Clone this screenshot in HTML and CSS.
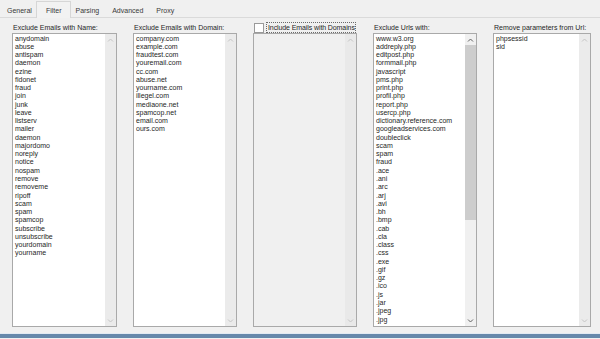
FILE: index.html
```html
<!DOCTYPE html>
<html lang="en">

<head>
    <meta charset="UTF-8">
    <meta name="viewport" content="width=device-width, initial-scale=1.0">
    <title>Filter Settings</title>
    <link rel="stylesheet" href="styles.css">
</head>

<body>
    <nav class="tabs">
        <span class="tab">General</span>
        <span class="tab active">Filter</span>
        <span class="tab">Parsing</span>
        <span class="tab">Advanced</span>
        <span class="tab">Proxy</span>
    </nav>

    <main class="panel">
        <!-- Exclude names -->
        <section class="field">
            <div class="caption">Exclude Emails with Name:</div>
            <div class="listbox">
                <ul class="items">
                    <li>anydomain</li>
                    <li>abuse</li>
                    <li>antispam</li>
                    <li>daemon</li>
                    <li>ezine</li>
                    <li>fidonet</li>
                    <li>fraud</li>
                    <li>join</li>
                    <li>junk</li>
                    <li>leave</li>
                    <li>listserv</li>
                    <li>mailer</li>
                    <li>daemon</li>
                    <li>majordomo</li>
                    <li>noreply</li>
                    <li>notice</li>
                    <li>nospam</li>
                    <li>remove</li>
                    <li>removeme</li>
                    <li>ripoff</li>
                    <li>scam</li>
                    <li>spam</li>
                    <li>spamcop</li>
                    <li>subscribe</li>
                    <li>unsubscribe</li>
                    <li>yourdomain</li>
                    <li>yourname</li>
                </ul>
                <div class="scrollbar">
                    <svg class="arrow" viewBox="0 0 7 4"><polyline points="1,3.5 3.5,1 6,3.5" /></svg>
                    <div class="track"></div>
                    <svg class="arrow" viewBox="0 0 7 4"><polyline points="1,0.5 3.5,3 6,0.5" /></svg>
                </div>
            </div>
        </section>

        <!-- Exclude domains -->
        <section class="field">
            <div class="caption">Exclude Emails with Domain:</div>
            <div class="listbox">
                <ul class="items">
                    <li>company.com</li>
                    <li>example.com</li>
                    <li>fraudtest.com</li>
                    <li>youremail.com</li>
                    <li>cc.com</li>
                    <li>abuse.net</li>
                    <li>yourname.com</li>
                    <li>illegel.com</li>
                    <li>mediaone.net</li>
                    <li>spamcop.net</li>
                    <li>email.com</li>
                    <li>ours.com</li>
                </ul>
                <div class="scrollbar">
                    <svg class="arrow" viewBox="0 0 7 4"><polyline points="1,3.5 3.5,1 6,3.5" /></svg>
                    <div class="track"></div>
                    <svg class="arrow" viewBox="0 0 7 4"><polyline points="1,0.5 3.5,3 6,0.5" /></svg>
                </div>
            </div>
        </section>

        <!-- Include domains (off) -->
        <section class="field">
            <label class="caption check">
                <span class="box"></span>
                <span class="check-text">Include Emails with Domains</span>
            </label>
            <div class="listbox disabled">
                <ul class="items"></ul>
                <div class="scrollbar">
                    <svg class="arrow" viewBox="0 0 7 4"><polyline points="1,3.5 3.5,1 6,3.5" /></svg>
                    <div class="track"></div>
                    <svg class="arrow" viewBox="0 0 7 4"><polyline points="1,0.5 3.5,3 6,0.5" /></svg>
                </div>
            </div>
        </section>

        <!-- Exclude urls -->
        <section class="field">
            <div class="caption">Exclude Urls with:</div>
            <div class="listbox">
                <ul class="items">
                    <li>www.w3.org</li>
                    <li>addreply.php</li>
                    <li>editpost.php</li>
                    <li>formmail.php</li>
                    <li>javascript</li>
                    <li>pms.php</li>
                    <li>print.php</li>
                    <li>profil.php</li>
                    <li>report.php</li>
                    <li>usercp.php</li>
                    <li>dictionary.reference.com</li>
                    <li>googleadservices.com</li>
                    <li>doubleclick</li>
                    <li>scam</li>
                    <li>spam</li>
                    <li>fraud</li>
                    <li>.ace</li>
                    <li>.ani</li>
                    <li>.arc</li>
                    <li>.arj</li>
                    <li>.avi</li>
                    <li>.bh</li>
                    <li>.bmp</li>
                    <li>.cab</li>
                    <li>.cla</li>
                    <li>.class</li>
                    <li>.css</li>
                    <li>.exe</li>
                    <li>.gif</li>
                    <li>.gz</li>
                    <li>.ico</li>
                    <li>.js</li>
                    <li>.jar</li>
                    <li>.jpeg</li>
                    <li>.jpg</li>
                </ul>
                <div class="scrollbar active">
                    <svg class="arrow" viewBox="0 0 7 4"><polyline points="1,3.5 3.5,1 6,3.5" /></svg>
                    <div class="track"><div class="thumb"></div></div>
                    <svg class="arrow" viewBox="0 0 7 4"><polyline points="1,0.5 3.5,3 6,0.5" /></svg>
                </div>
            </div>
        </section>

        <!-- Url parameters -->
        <section class="field">
            <div class="caption">Remove parameters from Url:</div>
            <div class="listbox">
                <ul class="items">
                    <li>phpsessid</li>
                    <li>sid</li>
                </ul>
                <div class="scrollbar">
                    <svg class="arrow" viewBox="0 0 7 4"><polyline points="1,3.5 3.5,1 6,3.5" /></svg>
                    <div class="track"></div>
                    <svg class="arrow" viewBox="0 0 7 4"><polyline points="1,0.5 3.5,3 6,0.5" /></svg>
                </div>
            </div>
        </section>
    </main>

    <footer class="edge"></footer>
</body>

</html>
```

FILE: styles.css
```css
body {
    margin: 0;
    height: 339px;
    overflow: hidden;
    background-color: #f0f0f0;
    font-family: "Liberation Sans", Arial, sans-serif;
    font-size: 7px;
    color: #262626;
}

/* Tab strip */
.tabs {
    display: flex;
    align-items: flex-end;
    height: 17px;
    padding-left: 0.5px;
    border-bottom: 1px solid #dadada;
}

.tab {
    height: 14px;
    line-height: 16px;
    padding: 0 6.5px;
    color: #3a3a3a;
}

.tab.active {
    height: 16px;
    line-height: 18px;
    margin: 0 -2px -1px;
    padding: 0 8.5px;
    background-color: #f2f2f2;
    border: 1px solid #d6d6d6;
    border-bottom: none;
    position: relative;
}

/* Panel with the five lists */
.panel {
    display: grid;
    grid-template-columns: 105px 104px 104px 104px 98px;
    column-gap: 16px;
    padding: 4px 0 0 12px;
}

.field {
    display: flex;
    flex-direction: column;
}

.caption {
    height: 11px;
    line-height: 11px;
    padding-left: 1px;
    white-space: nowrap;
}

/* Checkbox caption */
.check {
    display: flex;
    align-items: center;
    gap: 2px;
}

.box {
    width: 8px;
    height: 8px;
    flex: none;
    background-color: #fff;
    border: 1px solid #9a9a9a;
}

.check-text {
    height: 9px;
    line-height: 9px;
    padding: 0 0 0 1px;
    letter-spacing: -0.1px;
    border: 1px dotted #6a6a6a;
}

/* List boxes */
.listbox {
    display: flex;
    height: 292px;
    background-color: #fff;
    border: 1px solid #a9a9a9;
}

.listbox.disabled {
    background-color: #f0f0f0;
}

.items {
    flex: 1;
    margin: 0;
    padding: 0.5px 0 0 2px;
    list-style: none;
    overflow: hidden;
}

.items li {
    height: 8.28px;
    line-height: 8.28px;
    white-space: nowrap;
}

.scrollbar {
    display: flex;
    flex-direction: column;
    width: 11px;
    background-color: #ebebeb;
}

.disabled .scrollbar {
    background-color: #e9e9e9;
}

.arrow {
    display: block;
    width: 7px;
    height: 4px;
    margin: 4px auto 3px;
    fill: none;
    stroke: #c4c4c4;
    stroke-width: 1;
}

.track {
    flex: 1;
}

.scrollbar.active {
    background-color: #f0f0f0;
}

.scrollbar.active .arrow {
    stroke: #606060;
}

.thumb {
    height: 175px;
    background-color: #cdcdcd;
}

/* Window edge at the bottom */
.edge {
    margin-top: 6px;
    height: 4px;
    border-top: 1px solid #e2eaf2;
    background-color: #6688aa;
}
```
